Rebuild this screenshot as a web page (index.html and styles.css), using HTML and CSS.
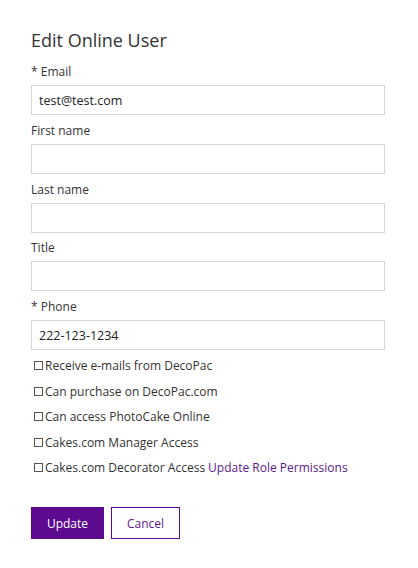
FILE: index.html
```html
<!DOCTYPE html>
<html>
<head>
<meta charset="utf-8">
<link rel="stylesheet" href="styles.css">
</head>
<body>
<div class="page">
  <h1 class="title">Edit Online User</h1>
  <form class="form">
    <div class="field">
      <label class="label">* Email</label>
      <input class="input" type="text" value="test@test.com">
    </div>
    <div class="field">
      <label class="label">First name</label>
      <input class="input" type="text" value="">
    </div>
    <div class="field">
      <label class="label">Last name</label>
      <input class="input" type="text" value="">
    </div>
    <div class="field">
      <label class="label">Title</label>
      <input class="input" type="text" value="">
    </div>
    <div class="field">
      <label class="label">* Phone</label>
      <input class="input" type="text" value="222-123-1234">
    </div>
    <div class="checks">
      <label class="check"><span class="box"></span>Receive e-mails from DecoPac</label>
      <label class="check"><span class="box"></span>Can purchase on DecoPac.com</label>
      <label class="check"><span class="box"></span>Can access PhotoCake Online</label>
      <label class="check"><span class="box"></span>Cakes.com Manager Access</label>
      <label class="check"><span class="box"></span>Cakes.com Decorator Access <a class="link" href="#">Update Role Permissions</a></label>
    </div>
    <div class="actions">
      <button type="button" class="btn btn-primary">Update</button>
      <button type="button" class="btn btn-secondary">Cancel</button>
    </div>
  </form>
</div>
</body>
</html>
```

FILE: styles.css
```css
html, body {
  margin: 0;
  padding: 0;
  background: #fff;
}
body {
  font-family: "Open Sans", "Noto Sans", sans-serif;
  color: #333;
}
.page {
  padding: 27px 33px 0 31px;
}
.title {
  margin: 0 0 9px 0;
  font-size: 18px;
  font-weight: 400;
  line-height: 26px;
  color: #333;
}
.form {
  display: flex;
  flex-direction: column;
}
.field {
  display: flex;
  flex-direction: column;
  margin-bottom: 5.75px;
}
.label {
  font-size: 12px;
  line-height: 16px;
  margin-top: 2px;
  margin-bottom: 5px;
  color: #333;
}
.input {
  box-sizing: border-box;
  width: 354px;
  height: 30px;
  margin: 0;
  border: 1px solid #d6d6d6;
  border-radius: 0;
  padding: 0 7px;
  font-family: "Open Sans", "Noto Sans", sans-serif;
  font-size: 12.5px;
  color: #222;
  outline: none;
}
.checks {
  display: flex;
  flex-direction: column;
  margin-top: -3px;
}
.check {
  display: flex;
  align-items: center;
  height: 25.5px;
  font-size: 12px;
  color: #333;
  white-space: nowrap;
}
.box {
  box-sizing: border-box;
  width: 9px;
  height: 9px;
  border: 1px solid #555;
  margin: 0 2px 0 3px;
  flex: none;
}
.link {
  color: #5c1a8c;
  text-decoration: none;
  margin-left: 3px;
}
.actions {
  display: flex;
  gap: 7px;
  margin-top: 26.75px;
}
.btn {
  box-sizing: border-box;
  height: 32px;
  font-family: "Open Sans", "Noto Sans", sans-serif;
  font-size: 12px;
  border-radius: 0;
  margin: 0;
  cursor: pointer;
}
.btn-primary {
  width: 73px;
  background: #5c0a8f;
  color: #fff;
  border: 1px solid #5c0a8f;
}
.btn-secondary {
  width: 69px;
  background: #fff;
  color: #5c1a8c;
  border: 1px solid #5c0a8f;
}
```
